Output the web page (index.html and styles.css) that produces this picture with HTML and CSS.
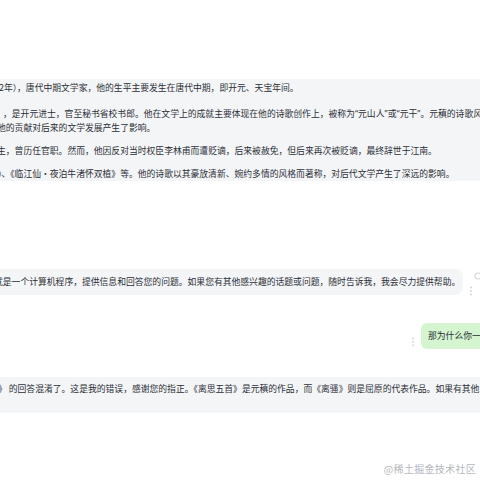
FILE: index.html
```html
<!DOCTYPE html>
<html lang="zh">
<head>
<meta charset="utf-8">
<link rel="stylesheet" href="styles.css">
</head>
<body>
<div class="page">
  <div class="chat">
    <div class="msg bot first">
      <div class="bubble wide">
        <p class="para p1"><span class="ln l1">2年），唐代中期文学家，他的生平主要发生在唐代中期，即开元、天宝年间。</span></p>
        <p class="para"><span class="ln l2">，是开元进士，官至秘书省校书郎。他在文学上的成就主要体现在他的诗歌创作上，被称为<span class="q">“</span>元山人<span class="q">”</span>或<span class="q">“</span>元干<span class="q">”</span>。元稹的诗歌风格清新自然，</span><span class="ln l3">他的贡献对后来的文学发展产生了影响。</span></p>
        <p class="para"><span class="ln l4">生，曾历任官职。然而，他因反对当时权臣李林甫而遭贬谪，后来被赦免，但后来再次被贬谪，最终辞世于江南。</span></p>
        <p class="para"><span class="ln l5">》、《临江仙·夜泊牛渚怀双植》等。他的诗歌以其豪放清新、婉约多情的风格而著称，对后代文学产生了深远的影响。</span></p>
      </div>
    </div>

    <div class="msg bot second">
      <div class="bubble short">
        <span class="ln l6">就是一个计算机程序，提供信息和回答您的问题。如果您有其他感兴趣的话题或问题，随时告诉我，我会尽力提供帮助。</span>
      </div>
      <div class="tools">
        <svg class="ico-circle" width="8" height="8" viewBox="0 0 8 8"><circle cx="4" cy="4" r="3" fill="none" stroke="#d4d6da" stroke-width="1.2"/></svg>
        <svg class="ico-dots" width="4" height="10" viewBox="0 0 4 10"><circle cx="2" cy="1.5" r="0.9" fill="#cfd2d6"/><circle cx="2" cy="5" r="0.9" fill="#cfd2d6"/><circle cx="2" cy="8.5" r="0.9" fill="#cfd2d6"/></svg>
      </div>
    </div>

    <div class="msg user">
      <svg class="ico-dots user-dots" width="4" height="10" viewBox="0 0 4 10"><circle cx="2" cy="1.5" r="0.9" fill="#cfd2d6"/><circle cx="2" cy="5" r="0.9" fill="#cfd2d6"/><circle cx="2" cy="8.5" r="0.9" fill="#cfd2d6"/></svg>
      <div class="bubble green">
        <span class="ln">那为什么你一开始说是</span>
      </div>
    </div>

    <div class="msg bot fourth">
      <div class="bubble wide tall">
        <span class="ln l7">》 的回答混淆了。这是我的错误，感谢您的指正。《离思五首》是元稹的作品，而《离骚》则是屈原的代表作品。如果有其他问题，</span>
      </div>
    </div>
  </div>
  <div class="watermark">@稀土掘金技术社区</div>
</div>
</body>
</html>
```

FILE: styles.css
```css
html, body {
  margin: 0;
  padding: 0;
  background: #ffffff;
}
body {
  width: 480px;
  height: 480px;
  overflow: hidden;
  font-family: "Noto Sans CJK SC", "Noto Sans", sans-serif;
  color: #2b2f36;
}
.page {
  width: 480px;
  height: 480px;
  overflow: hidden;
  display: flex;
  flex-direction: column;
}
.chat {
  display: flex;
  flex-direction: column;
  padding-top: 79px;
}
.msg {
  display: flex;
  align-items: flex-start;
}
.bubble {
  background: #f4f5f7;
  border-radius: 8px;
  font-size: 8.8px;
  line-height: 14px;
  overflow: hidden;
}
.bubble.wide {
  margin-left: -20px;
  width: 560px;
  flex-shrink: 0;
  padding: 2px 0 0 20px;
}
.para {
  margin: 0 0 9px 0;
}
.para.p1 {
  margin-bottom: 12px;
}
.para:last-child {
  margin-bottom: 0;
}
.ln {
  display: block;
  white-space: nowrap;
  height: 14px;
}
.q {
  font-family: "Noto Sans", sans-serif;
}
.l1 { margin-left: -1px; }
.l2 { margin-left: 3px; }
.l3 { margin-left: -3px; }
.l4 { margin-left: -3px; }
.l5 { margin-left: -3px; }
.l6 { margin-left: -6px; }
.l7 { margin-left: -2px; }

.second {
  margin-top: 88px;
}
.bubble.short {
  margin-left: -20px;
  width: 483px;
  flex-shrink: 0;
  padding: 6px 0 6px 20px;
  box-sizing: border-box;
}
.tools {
  display: flex;
  flex-direction: column;
  align-items: flex-start;
  flex-shrink: 0;
  margin-left: 4px;
  padding-top: 3px;
}
.ico-circle {
  display: block;
  margin-left: 7px;
}
.tools .ico-dots {
  display: block;
  margin-top: 6px;
  margin-left: 2px;
}

.user {
  margin-top: 27px;
  justify-content: flex-end;
  align-items: flex-end;
  margin-right: -60px;
}
.user-dots {
  display: block;
  margin-right: 6px;
  margin-bottom: 2px;
}
.bubble.green {
  background: #d5f5d0;
  border-radius: 6px;
  padding: 6px 10px 6px 7px;
  width: 102px;
}

.fourth {
  margin-top: 28px;
}
.bubble.tall {
  padding: 5px 0 17px 20px;
}

.watermark {
  margin-top: auto;
  align-self: flex-end;
  margin-right: 4px;
  margin-bottom: 4px;
  font-size: 10px;
  line-height: 14px;
  color: #b5b8bd;
  font-family: "Noto Sans CJK SC", serif;
  letter-spacing: 0.3px;
}
```
